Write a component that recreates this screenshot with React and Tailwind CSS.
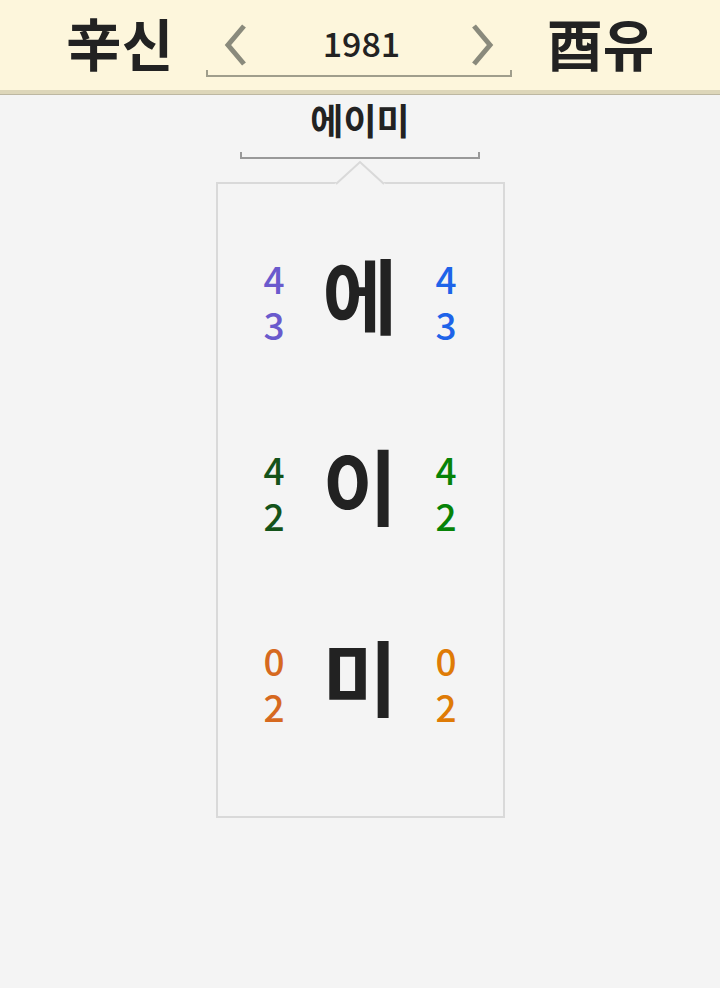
const FONT = { fontFamily: '"Noto Sans CJK KR", "Noto Sans", sans-serif' }

const ROWS = [
  { ch: '에', left: ['4', '3'], right: ['4', '3'], lc: 'text-[#6a5acd]', rc: 'text-[#1e63e9]' },
  { ch: '이', left: ['4', '2'], right: ['4', '2'], lc: 'text-[#14531a]', rc: 'text-[#078307]' },
  { ch: '미', left: ['0', '2'], right: ['0', '2'], lc: 'text-[#d6691f]', rc: 'text-[#df7b06]' },
]

function Chevron({ dir }) {
  return (
    <svg width="26" height="44" viewBox="0 0 26 44">
      <path
        d={dir === 'left' ? 'M21 3 L5 22 L21 41' : 'M5 3 L21 22 L5 41'}
        fill="none"
        stroke="#8a8a7c"
        strokeWidth="5"
      />
    </svg>
  )
}

function Numbers({ vals, color }) {
  return (
    <div className={`flex flex-col items-center gap-[2px] w-[40px] text-[37px] font-medium leading-[44px] ${color}`}>
      {vals.map((v, i) => (
        <span key={i} className="block h-[44px]">{v}</span>
      ))}
    </div>
  )
}

export default function App() {
  return (
    <div className="w-[720px] h-[988px] bg-[#f4f4f4] text-[#222]" style={FONT}>
      {/* header */}
      <div className="h-[90px] bg-[#fdf6dc] flex items-center justify-center">
        <div className="text-[56px] font-bold leading-none w-[120px] text-center mr-[26px] mt-[-6px]">辛신</div>
        <div className="relative w-[306px] h-[62px] flex items-center justify-between px-[17px]">
          <Chevron dir="left" />
          <span className="text-[34px] font-medium leading-none mt-[-4px] ml-[6px]">1981</span>
          <Chevron dir="right" />
          <div className="absolute left-0 right-0 bottom-[-1px] h-[7px] border-x-2 border-b-2 border-[#a09e8c]" />
        </div>
        <div className="text-[56px] font-bold leading-none w-[120px] text-center ml-[29px] mt-[-6px]">酉유</div>
      </div>
      <div className="h-[4px] bg-[#ddd6b9]" />
      <div className="h-[1px] bg-[#bdb7a1]" />

      {/* title */}
      <div className="flex flex-col items-center pt-[1px]">
        <div className="text-[36px] font-bold leading-[46px]">에이미</div>
        <div className="w-[240px] h-[7px] mt-[10px] border-x-2 border-b-2 border-[#999]" />
      </div>

      {/* box */}
      <div className="relative mx-auto mt-[23px] w-[289px] border-2 border-[#d9d9d9] pt-[20px] pb-[39px]">
        <svg className="absolute left-[116px] top-[-24px]" width="52" height="26" viewBox="0 0 52 26">
          <path d="M0 24.5 L26 1.5 L52 24.5 Z" fill="#f4f4f4" />
          <path d="M2 24 L26 2 L50 24" fill="none" stroke="#d9d9d9" strokeWidth="2" />
        </svg>
        {ROWS.map(r => (
          <div key={r.ch} className="h-[191px] flex items-center justify-center gap-[24px]">
            <div className="mt-[2px]">
              <Numbers vals={r.left} color={r.lc} />
            </div>
            <div className="text-[82px] font-bold leading-none w-[84px] text-center mt-[-14px]">{r.ch}</div>
            <div className="mt-[2px]">
              <Numbers vals={r.right} color={r.rc} />
            </div>
          </div>
        ))}
      </div>
    </div>
  )
}
